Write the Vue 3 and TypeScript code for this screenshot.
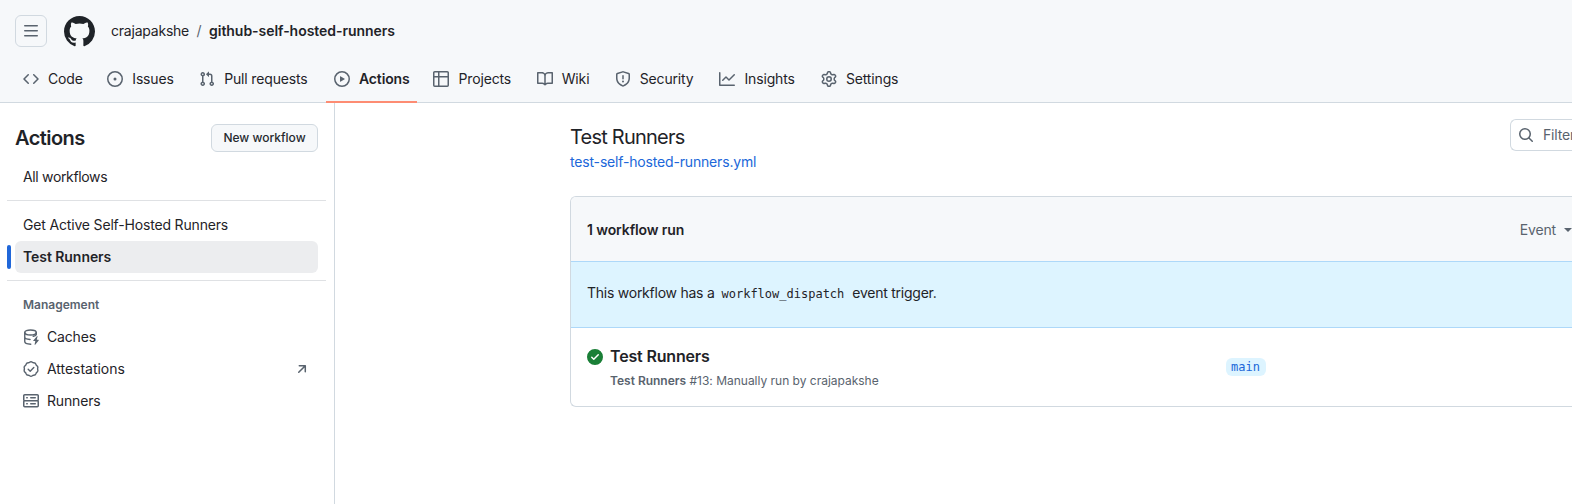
<script setup lang="ts">
interface NavItem {
  label: string
  icon: string
  active?: boolean
}

const icons: Record<string, string> = {
  menu: 'M1 2.75A.75.75 0 0 1 1.75 2h12.5a.75.75 0 0 1 0 1.5H1.75A.75.75 0 0 1 1 2.75Zm0 5A.75.75 0 0 1 1.75 7h12.5a.75.75 0 0 1 0 1.5H1.75A.75.75 0 0 1 1 7.75ZM1.75 12h12.5a.75.75 0 0 1 0 1.5H1.75a.75.75 0 0 1 0-1.5Z',
  github: 'M8 0c4.42 0 8 3.58 8 8a8.013 8.013 0 0 1-5.45 7.59c-.4.08-.55-.17-.55-.38 0-.27.01-1.13.01-2.2 0-.75-.25-1.23-.54-1.48 1.78-.2 3.65-.88 3.65-3.95 0-.88-.31-1.59-.82-2.15.08-.2.36-1.02-.08-2.12 0 0-.67-.22-2.2.82-.64-.18-1.32-.27-2-.27-.68 0-1.36.09-2 .27-1.53-1.03-2.2-.82-2.2-.82-.44 1.1-.16 1.92-.08 2.12-.51.56-.82 1.28-.82 2.15 0 3.06 1.86 3.75 3.64 3.95-.23.2-.44.55-.51 1.07-.46.21-1.61.55-2.33-.66-.15-.24-.6-.83-1.23-.82-.67.01-.27.38.01.53.34.19.73.9.82 1.13.16.45.68 1.31 2.69.94 0 .67.01 1.3.01 1.49 0 .21-.15.45-.55.38A7.995 7.995 0 0 1 0 8c0-4.42 3.58-8 8-8Z',
  code: 'm11.28 3.22 4.25 4.25a.75.75 0 0 1 0 1.06l-4.25 4.25a.749.749 0 0 1-1.275-.326.749.749 0 0 1 .215-.734L13.94 8l-3.72-3.72a.749.749 0 0 1 .326-1.275.749.749 0 0 1 .734.215Zm-6.56 0a.751.751 0 0 1 1.042.018.751.751 0 0 1 .018 1.042L2.06 8l3.72 3.72a.749.749 0 0 1-.326 1.275.749.749 0 0 1-.734-.215L.47 8.53a.75.75 0 0 1 0-1.06Z',
  issue: 'M8 9.5a1.5 1.5 0 1 0 0-3 1.5 1.5 0 0 0 0 3ZM8 0a8 8 0 1 1 0 16A8 8 0 0 1 8 0ZM1.5 8a6.5 6.5 0 1 0 13 0 6.5 6.5 0 0 0-13 0Z',
  pull: 'M1.5 3.25a2.25 2.25 0 1 1 3 2.122v5.256a2.251 2.251 0 1 1-1.5 0V5.372A2.25 2.25 0 0 1 1.5 3.25Zm5.677-.177L9.573.677A.25.25 0 0 1 10 .854V2.5h1A2.5 2.5 0 0 1 13.5 5v5.628a2.251 2.251 0 1 1-1.5 0V5a1 1 0 0 0-1-1h-1v1.646a.25.25 0 0 1-.427.177L7.177 3.427a.25.25 0 0 1 0-.354ZM3.75 2.5a.75.75 0 1 0 0 1.5.75.75 0 0 0 0-1.5Zm0 9.5a.75.75 0 1 0 0 1.5.75.75 0 0 0 0-1.5Zm8.25.75a.75.75 0 1 0 1.5 0 .75.75 0 0 0-1.5 0Z',
  play: 'M8 0a8 8 0 1 1 0 16A8 8 0 0 1 8 0ZM1.5 8a6.5 6.5 0 1 0 13 0 6.5 6.5 0 0 0-13 0Zm4.879-2.773 4.264 2.559a.25.25 0 0 1 0 .428l-4.264 2.559A.25.25 0 0 1 6 10.559V5.442a.25.25 0 0 1 .379-.215Z',
  table: 'M0 1.75C0 .784.784 0 1.75 0h12.5C15.216 0 16 .784 16 1.75v12.5A1.75 1.75 0 0 1 14.25 16H1.75A1.75 1.75 0 0 1 0 14.25ZM6.5 6.5v8h7.75a.25.25 0 0 0 .25-.25V6.5Zm8-1.5V1.75a.25.25 0 0 0-.25-.25H6.5V5Zm-13 1.5v7.75c0 .138.112.25.25.25H5v-8ZM5 5V1.5H1.75a.25.25 0 0 0-.25.25V5Z',
  book: 'M0 1.75A.75.75 0 0 1 .75 1h4.253c1.227 0 2.317.59 3 1.501A3.743 3.743 0 0 1 11.006 1h4.245a.75.75 0 0 1 .75.75v10.5a.75.75 0 0 1-.75.75h-4.507a2.25 2.25 0 0 0-1.591.659l-.622.621a.75.75 0 0 1-1.06 0l-.622-.621A2.25 2.25 0 0 0 5.258 13H.75a.75.75 0 0 1-.75-.75Zm7.251 10.324.004-5.073-.002-2.253A2.25 2.25 0 0 0 5.003 2.5H1.5v9h3.757a3.75 3.75 0 0 1 1.994.574ZM8.755 4.75l-.004 7.322a3.752 3.752 0 0 1 1.992-.572H14.5v-9h-3.495a2.25 2.25 0 0 0-2.25 2.25Z',
  shield: 'M7.467.133a1.748 1.748 0 0 1 1.066 0l5.25 1.68A1.75 1.75 0 0 1 15 3.48V7c0 1.566-.32 3.182-1.303 4.682-.983 1.498-2.585 2.813-5.032 3.855a1.697 1.697 0 0 1-1.33 0c-2.447-1.042-4.049-2.357-5.032-3.855C1.32 10.182 1 8.566 1 7V3.48a1.755 1.755 0 0 1 1.217-1.667Zm.61 1.429a.25.25 0 0 0-.153 0l-5.25 1.68a.25.25 0 0 0-.174.238V7c0 1.358.275 2.666 1.057 3.86.784 1.194 2.121 2.34 4.366 3.297a.196.196 0 0 0 .154 0c2.245-.956 3.582-2.104 4.366-3.298C13.225 9.666 13.5 8.36 13.5 7V3.48a.251.251 0 0 0-.174-.237l-5.25-1.68ZM8.75 4.75v3a.75.75 0 0 1-1.5 0v-3a.75.75 0 0 1 1.5 0ZM9 10.5a1 1 0 1 1-2 0 1 1 0 0 1 2 0Z',
  graph: 'M1.5 1.75V13.5h13.75a.75.75 0 0 1 0 1.5H.75a.75.75 0 0 1-.75-.75V1.75a.75.75 0 0 1 1.5 0Zm14.28 2.53-5.25 5.25a.75.75 0 0 1-1.06 0L7 7.06 4.28 9.78a.751.751 0 0 1-1.042-.018.751.751 0 0 1-.018-1.042l3.25-3.25a.75.75 0 0 1 1.06 0L10 7.94l4.72-4.72a.751.751 0 0 1 1.042.018.751.751 0 0 1 .018 1.042Z',
  gear: 'M8 0a8.2 8.2 0 0 1 .701.031C9.444.095 9.99.645 10.16 1.29l.288 1.107c.018.066.079.158.212.224.231.114.454.243.668.386.123.082.233.09.299.071l1.103-.303c.644-.176 1.392.021 1.82.63.27.385.506.792.704 1.218.315.675.111 1.422-.364 1.891l-.814.806c-.049.048-.098.147-.088.294.016.257.016.515 0 .772-.01.147.038.246.088.294l.814.806c.475.469.679 1.216.364 1.891a7.977 7.977 0 0 1-.704 1.217c-.428.61-1.176.807-1.82.63l-1.102-.302c-.067-.019-.177-.011-.3.071a5.909 5.909 0 0 1-.668.386c-.133.066-.194.158-.211.224l-.29 1.106c-.168.646-.715 1.196-1.458 1.26a8.006 8.006 0 0 1-1.402 0c-.743-.064-1.289-.614-1.458-1.26l-.289-1.106c-.018-.066-.079-.158-.212-.224a5.738 5.738 0 0 1-.668-.386c-.123-.082-.233-.09-.299-.071l-1.103.303c-.644.176-1.392-.021-1.82-.63a8.12 8.12 0 0 1-.704-1.218c-.315-.675-.111-1.422.363-1.891l.815-.806c.05-.048.098-.147.088-.294a6.214 6.214 0 0 1 0-.772c.01-.147-.038-.246-.088-.294l-.815-.806C.635 6.045.431 5.298.746 4.623a7.92 7.92 0 0 1 .704-1.217c.428-.61 1.176-.807 1.82-.63l1.102.302c.067.019.177.011.3-.071.214-.143.437-.272.668-.386.133-.066.194-.158.211-.224l.29-1.106C6.009.645 6.556.095 7.299.03 7.53.01 7.764 0 8 0Zm-.571 1.525c-.036.003-.108.036-.137.146l-.289 1.105c-.147.561-.549.967-.998 1.189-.173.086-.34.183-.5.29-.417.278-.97.423-1.529.27l-1.103-.303c-.109-.03-.175.016-.195.045-.22.312-.412.644-.573.99-.014.031-.021.11.059.19l.815.806c.411.406.562.957.53 1.456a4.709 4.709 0 0 0 0 .582c.032.499-.119 1.05-.53 1.456l-.815.806c-.081.08-.073.159-.059.19.162.346.353.677.573.989.02.03.085.076.195.046l1.102-.303c.56-.153 1.113-.008 1.53.27.161.107.328.204.501.29.447.222.85.629.997 1.189l.289 1.105c.029.109.101.143.137.146a6.6 6.6 0 0 0 1.142 0c.036-.003.108-.036.137-.146l.289-1.105c.147-.561.549-.967.998-1.189.173-.086.34-.183.5-.29.417-.278.97-.423 1.529-.27l1.103.303c.109.029.175-.016.195-.045.22-.313.411-.644.573-.99.014-.031.021-.11-.059-.19l-.815-.806c-.411-.406-.562-.957-.53-1.456a4.709 4.709 0 0 0 0-.582c-.032-.499.119-1.05.53-1.456l.815-.806c.081-.08.073-.159.059-.19a6.464 6.464 0 0 0-.573-.989c-.02-.03-.085-.076-.195-.046l-1.102.303c-.56.153-1.113.008-1.53-.27a4.44 4.44 0 0 0-.501-.29c-.447-.222-.85-.629-.997-1.189l-.289-1.105c-.029-.11-.101-.143-.137-.146a6.6 6.6 0 0 0-1.142 0ZM11 8a3 3 0 1 1-6 0 3 3 0 0 1 6 0ZM9.5 8a1.5 1.5 0 1 0-3.001.001A1.5 1.5 0 0 0 9.5 8Z',
  server: 'M1.75 1h12.5c.966 0 1.75.784 1.75 1.75v4c0 .372-.116.717-.314 1 .198.283.314.628.314 1v4a1.75 1.75 0 0 1-1.75 1.75H1.75A1.75 1.75 0 0 1 0 12.75v-4c0-.358.109-.707.314-1a1.739 1.739 0 0 1-.314-1v-4C0 1.784.784 1 1.75 1ZM1.5 2.75v4c0 .138.112.25.25.25h12.5a.25.25 0 0 0 .25-.25v-4a.25.25 0 0 0-.25-.25H1.75a.25.25 0 0 0-.25.25Zm.25 5.75a.25.25 0 0 0-.25.25v4c0 .138.112.25.25.25h12.5a.25.25 0 0 0 .25-.25v-4a.25.25 0 0 0-.25-.25ZM7 4.75A.75.75 0 0 1 7.75 4h4.5a.75.75 0 0 1 0 1.5h-4.5A.75.75 0 0 1 7 4.75ZM7.75 10h4.5a.75.75 0 0 1 0 1.5h-4.5a.75.75 0 0 1 0-1.5ZM3 4.75A.75.75 0 0 1 3.75 4h.5a.75.75 0 0 1 0 1.5h-.5A.75.75 0 0 1 3 4.75ZM3.75 10h.5a.75.75 0 0 1 0 1.5h-.5a.75.75 0 0 1 0-1.5Z',
  arrow: 'M4.53 4.75A.75.75 0 0 1 5.28 4h6.01a.75.75 0 0 1 .75.75v6.01a.75.75 0 0 1-1.5 0v-4.2l-5.26 5.261a.749.749 0 0 1-1.275-.326.749.749 0 0 1 .215-.734L9.48 5.5h-4.2a.75.75 0 0 1-.75-.75Z',
  search: 'M10.68 11.74a6 6 0 0 1-7.922-8.982 6 6 0 0 1 8.982 7.922l3.04 3.04a.749.749 0 0 1-.326 1.275.749.749 0 0 1-.734-.215ZM11.5 7a4.499 4.499 0 1 0-8.997 0A4.499 4.499 0 0 0 11.5 7Z',
  success: 'M8 16A8 8 0 1 1 8 0a8 8 0 0 1 0 16Zm3.78-9.72a.751.751 0 0 0-.018-1.042.751.751 0 0 0-1.042-.018L6.75 9.19 5.28 7.72a.751.751 0 0 0-1.042.018.751.751 0 0 0-.018 1.042l2 2a.75.75 0 0 0 1.06 0Z',
}

const navItems: NavItem[] = [
  { label: 'Code', icon: 'code' },
  { label: 'Issues', icon: 'issue' },
  { label: 'Pull requests', icon: 'pull' },
  { label: 'Actions', icon: 'play', active: true },
  { label: 'Projects', icon: 'table' },
  { label: 'Wiki', icon: 'book' },
  { label: 'Security', icon: 'shield' },
  { label: 'Insights', icon: 'graph' },
  { label: 'Settings', icon: 'gear' },
]
</script>

<template>
  <div class="page">
    <header class="header">
      <div class="topbar">
        <button class="menu" aria-label="Menu"><svg class="icon" viewBox="0 0 16 16"><path :d="icons.menu" /></svg></button>
        <svg class="logo" viewBox="0 0 16 16"><path :d="icons.github" /></svg>
        <div class="crumbs">
          <span class="owner">crajapakshe</span><span class="slash">/</span><strong class="repo">github-self-hosted-runners</strong>
        </div>
      </div>
      <nav class="tabs">
        <a v-for="item in navItems" :key="item.label" class="tab" :class="{ active: item.active }">
          <svg class="icon" viewBox="0 0 16 16"><path :d="icons[item.icon]" /></svg>
          <span class="tab-label" :data-content="item.label">{{ item.label }}</span>
        </a>
      </nav>
    </header>

    <div class="body">
      <aside class="sidebar">
        <div class="side-head">
          <h2>Actions</h2>
          <button class="new">New workflow</button>
        </div>
        <a class="row all">All workflows</a>
        <hr />
        <a class="row">Get Active Self-Hosted Runners</a>
        <a class="row selected">Test Runners</a>
        <hr />
        <h3>Management</h3>
        <a class="row">
          <svg class="icon" viewBox="0 0 16 16">
            <g class="stroke">
              <ellipse cx="7.5" cy="3.5" rx="5.75" ry="2.5" />
              <path d="M1.75 3.5v9c0 1.4 2.2 2.6 6 2.7M1.75 8c0 1.3 2.1 2.3 5.3 2.5M13.25 3.5v2.2c-.4 .8-1.5 1.3-3 1.6" />
            </g>
            <path d="M13.9 7.2 10.3 11.4c-.2.3 0 .6.3.6h1.7l-.7 3.4c-.1.4.3.6.6.3l3.5-4.3c.2-.3 0-.6-.3-.6h-1.6l.7-3.3c.1-.4-.4-.6-.6-.3Z" />
          </svg>
          <span>Caches</span>
        </a>
        <a class="row">
          <svg class="icon" viewBox="0 0 16 16">
            <g class="stroke">
              <path d="M6.6 1.3Q8 .2 9.4 1.3Q9.9 1.8 10.8 1.7Q12.4 1.8 12.9 3.3Q13.1 4.1 13.8 4.6Q15.2 5.5 14.7 7.1Q14.5 8 14.8 8.8Q15.2 10.4 13.8 11.4Q13.1 11.9 12.9 12.7Q12.4 14.2 10.8 14.3Q9.9 14.2 9.4 14.7Q8 15.8 6.6 14.7Q6.1 14.2 5.2 14.3Q3.6 14.2 3.1 12.7Q2.9 11.9 2.2 11.4Q.8 10.4 1.3 8.8Q1.5 8 1.3 7.1Q.8 5.5 2.2 4.6Q2.9 4.1 3.1 3.3Q3.6 1.8 5.2 1.7Q6.1 1.8 6.6 1.3Z" />
              <path d="m5.2 8.2 2 2 3.6-3.7" />
            </g>
          </svg>
          <span class="wide">Attestations</span>
          <svg class="icon trailing" viewBox="0 0 16 16"><path :d="icons.arrow" /></svg>
        </a>
        <a class="row">
          <svg class="icon" viewBox="0 0 16 16"><path :d="icons.server" /></svg>
          <span>Runners</span>
        </a>
      </aside>

      <main class="main">
        <div class="main-head">
          <div>
            <h1>Test Runners</h1>
            <a class="file">test-self-hosted-runners.yml</a>
          </div>
          <div class="filter">
            <svg class="icon" viewBox="0 0 16 16"><path :d="icons.search" /></svg>
            <span>Filter workflow runs</span>
          </div>
        </div>
        <section class="box">
          <div class="box-head">
            <strong>1 workflow run</strong>
            <div class="event"><span>Event</span><i class="caret"></i></div>
          </div>
          <div class="notice">
            <span>This workflow has a</span><code>workflow_dispatch</code><span>event trigger.</span>
          </div>
          <div class="run">
            <svg class="icon ok" viewBox="0 0 16 16"><path :d="icons.success" /></svg>
            <div class="run-text">
              <div class="run-title">Test Runners</div>
              <div class="run-sub"><b>Test Runners</b> #13: Manually run by crajapakshe</div>
            </div>
            <span class="branch">main</span>
          </div>
        </section>
      </main>
    </div>
  </div>
</template>

<style>
body {
  margin: 0;
  background: #fff;
}
</style>

<style scoped>
* {
  box-sizing: border-box;
}
.page {
  width: 100vw;
  height: 504px;
  overflow: hidden;
  display: flex;
  flex-direction: column;
  font: 14px/20px Inter, "Liberation Sans", sans-serif;
  letter-spacing: -0.17px;
  color: #1f2328;
}
.icon {
  width: 16px;
  height: 16px;
  flex: none;
  fill: #59636e;
}
.stroke {
  fill: none;
  stroke: #59636e;
  stroke-width: 1.4;
  stroke-linecap: round;
  stroke-linejoin: round;
}
.header {
  flex: none;
  height: 103px;
  background: #f6f8fa;
  border-bottom: 1px solid #d1d9e0;
  padding: 15px 15px 0;
  display: flex;
  flex-direction: column;
  justify-content: space-between;
}
.topbar {
  height: 32px;
  display: flex;
  align-items: center;
}
.menu {
  width: 32px;
  height: 32px;
  padding: 0;
  border: 1px solid #d1d9e0;
  border-radius: 6px;
  background: none;
  display: grid;
  place-items: center;
}
.logo {
  width: 31px;
  height: 31px;
  margin: 0 16px 0 17px;
  fill: #1f2328;
}
.owner {
  letter-spacing: -0.22px;
}
.crumbs {
  display: flex;
}
.slash {
  color: #59636e;
  width: 20px;
  text-align: center;
}
.repo {
  font-weight: 600;
  letter-spacing: -0.04px;
}
.tabs {
  display: flex;
  gap: 8px;
  height: 47px;
  margin-bottom: -1px;
}
.tab {
  display: flex;
  gap: 9px;
  padding: 13px 8px 0;
  height: 47px;
  align-items: flex-start;
  border-bottom: 2px solid transparent;
  letter-spacing: -0.15px;
}
.tab .icon {
  margin-top: 2px;
}
.tab.active {
  font-weight: 600;
  border-color: #fd8c73;
}
.tab-label::before {
  content: attr(data-content);
  display: block;
  height: 0;
  visibility: hidden;
  font-weight: 600;
}
.body {
  flex: 1;
  display: flex;
}
.sidebar {
  width: 335px;
  flex: none;
  border-right: 1px solid #d1d9e0;
  padding: 21px 16px 0 15px;
}
.side-head {
  display: flex;
  justify-content: space-between;
  align-items: center;
  height: 28px;
  margin-bottom: 9px;
}
h1, h2, h3 {
  margin: 0;
}
h2 {
  font-size: 20px;
  line-height: 28px;
  font-weight: 600;
  letter-spacing: -0.55px;
}
.new {
  width: 107px;
  height: 28px;
  padding: 0;
  border: 1px solid #d1d9e0;
  border-radius: 6px;
  background: #f6f8fa;
  color: #25292e;
  font: 500 12px/18px Inter, "Liberation Sans", sans-serif;
}
.row {
  position: relative;
  display: flex;
  align-items: center;
  gap: 8px;
  height: 32px;
  padding: 0 8px;
  border-radius: 6px;
}
.row.all {
  letter-spacing: -0.34px;
}
.wide {
  letter-spacing: -0.03px;
}
.row.selected {
  background: #ecedef;
  font-weight: 600;
  letter-spacing: -0.06px;
}
.row.selected::before {
  content: "";
  position: absolute;
  left: -8px;
  top: 4px;
  width: 4px;
  height: 24px;
  border-radius: 6px;
  background: #2067d9;
}
.trailing {
  margin-left: auto;
}
hr {
  height: 1px;
  border: 0;
  background: #dfe1e4;
  margin: 7px -8px 8px;
}
h3 {
  font-size: 12px;
  line-height: 18px;
  font-weight: 600;
  color: #59636e;
  letter-spacing: 0;
  padding: 7px 8px 7px;
}
.main {
  flex: 1;
  padding: 16px 0 0 235px;
  min-width: 0;
}
.main-head {
  display: flex;
  justify-content: space-between;
  height: 77px;
}
h1 {
  font-size: 20px;
  line-height: 30px;
  padding-top: 3px;
  font-weight: 400;
  letter-spacing: -0.78px;
}
.file {
  display: block;
  color: #2067d9;
}
.filter {
  display: flex;
  align-items: center;
  gap: 9px;
  width: 62px;
  height: 32px;
  padding-left: 7px;
  border: 1px solid #d1d9e0;
  border-right: 0;
  border-radius: 6px 0 0 6px;
  white-space: nowrap;
  overflow: hidden;
  color: #59636e;
}
.box {
  height: 211px;
  border: 1px solid #d1d9e0;
  border-right: 0;
  border-radius: 6px 0 0 6px;
  overflow: hidden;
}
.box-head {
  height: 64px;
  background: #f6f8fa;
  display: flex;
  justify-content: space-between;
  align-items: center;
  padding: 1px 0 0 16px;
}
.box-head strong {
  font-weight: 600;
  letter-spacing: -0.1px;
}
.event {
  display: flex;
  align-items: center;
  gap: 8px;
  color: #59636e;
}
.caret {
  border: 4px solid transparent;
  border-top-color: #59636e;
  border-bottom: 0;
}
.notice {
  height: 67px;
  background: #ddf4ff;
  border: solid #add8f9;
  border-width: 1px 0;
  padding: 0 0 3px 16px;
  letter-spacing: -0.25px;
  display: flex;
  align-items: center;
}
code, .branch {
  font-family: "DejaVu Sans Mono", "Liberation Mono", monospace;
  font-size: 12px;
  letter-spacing: 0;
}
code {
  padding: 1px 8px 0 7px;
}
.run {
  display: flex;
  align-items: flex-start;
  padding: 16px 0 0 16px;
}
.ok {
  fill: #1a7f37;
  margin: 5px 7px 0 0;
}
.run-text {
  width: 616px;
}
.run-title {
  font-size: 16px;
  line-height: 24px;
  font-weight: 600;
}
.run-sub {
  font-size: 12px;
  line-height: 18px;
  padding-top: 4px;
  letter-spacing: -0.01px;
  color: #59636e;
}
.run-sub b {
  font-weight: 600;
}
.branch {
  margin-top: 14px;
  height: 18px;
  line-height: 18px;
  padding: 0 6px 0 5px;
  border-radius: 6px;
  background: #ddf4ff;
  color: #2067d9;
}
</style>
